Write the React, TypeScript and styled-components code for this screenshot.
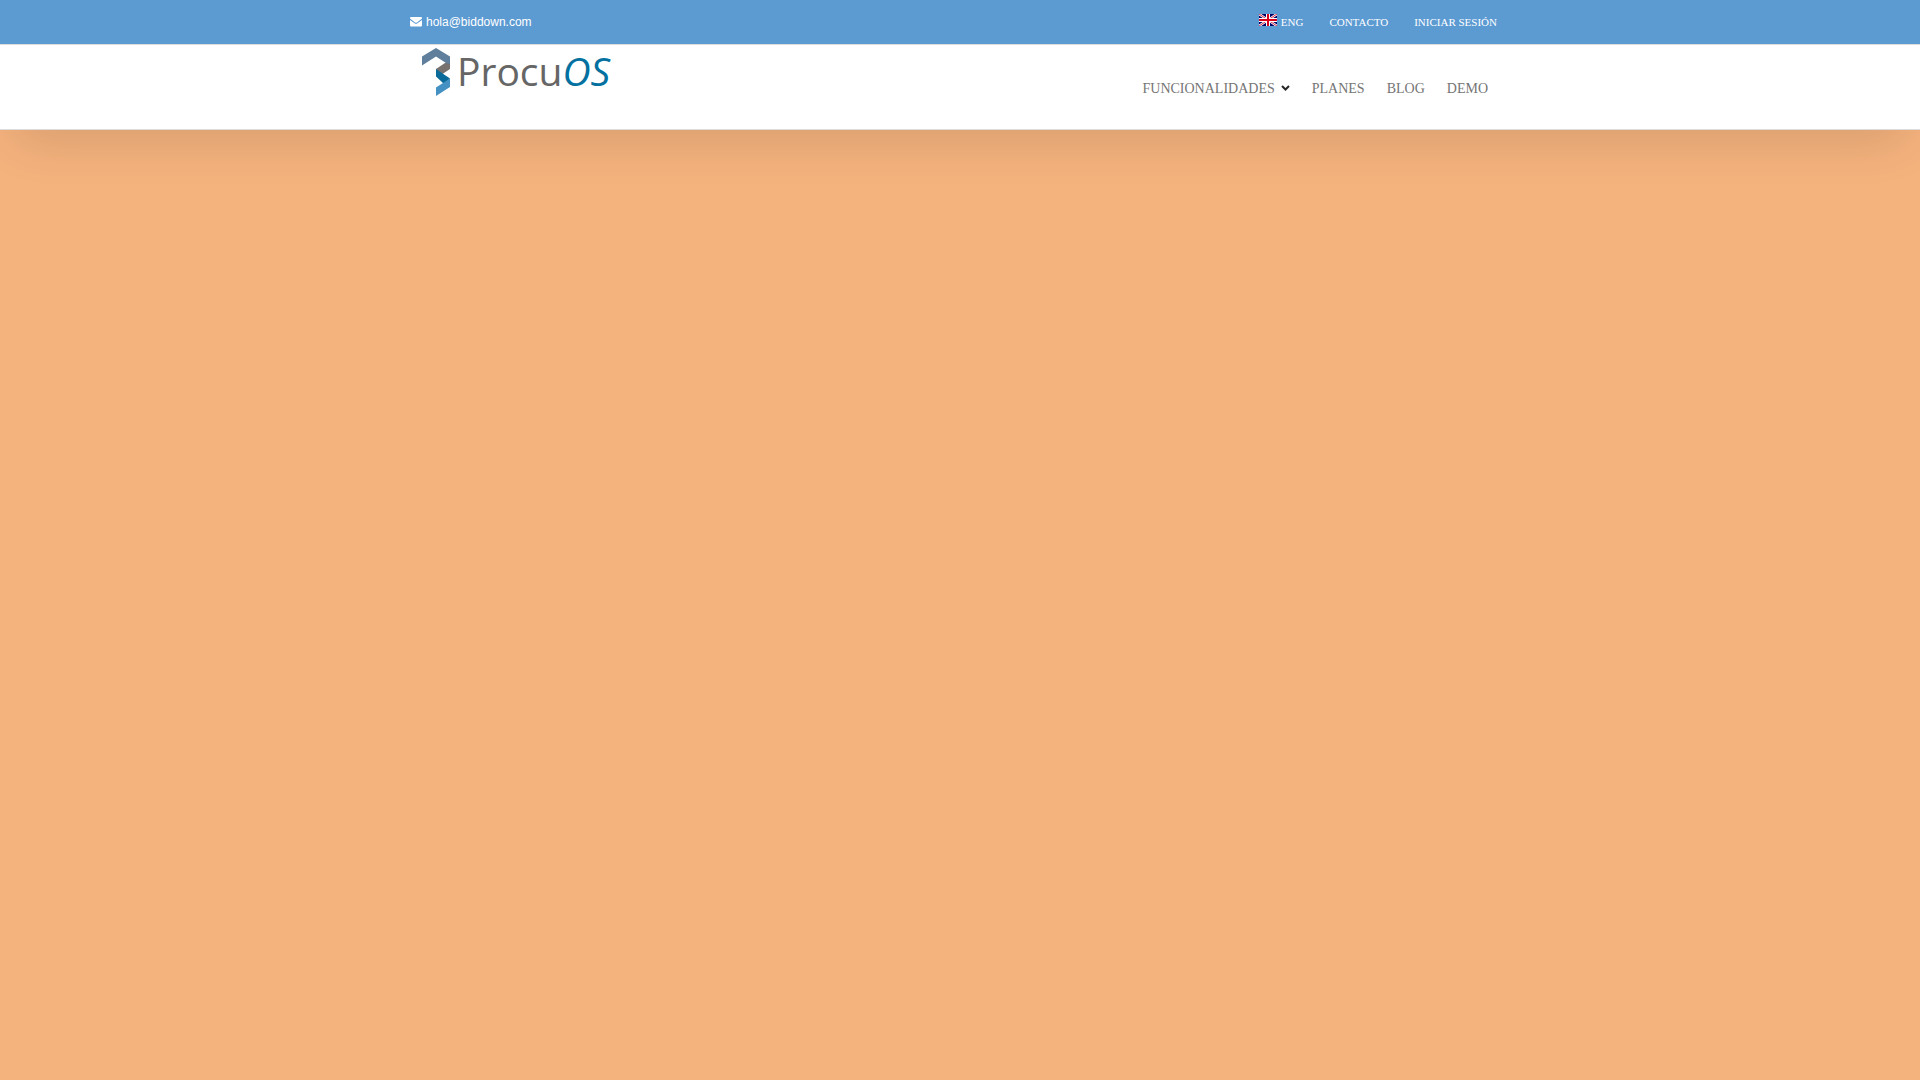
import React from "react";
import styled, { createGlobalStyle } from "styled-components";

const GlobalStyle = createGlobalStyle`
  *, *::before, *::after { box-sizing: border-box; }
  body {
    margin: 0;
    background: #f4b27d;
    font-family: "Liberation Serif", "Times New Roman", serif;
  }
`;

const Page = styled.div`
  min-height: 100vh;
  overflow-x: clip;
  background: #f4b27d;
`;

const Header = styled.header`
  box-shadow: 0 25px 50px -15px rgba(0, 0, 0, 0.12);
`;

const Bar = styled.div<{ $tone: string }>`
  background: ${(p) => p.$tone};
  border-bottom: 1px solid #dcdcdc;
`;

const Container = styled.div<{ $height: number }>`
  display: flex;
  justify-content: space-between;
  width: calc(100% - 40px);
  max-width: 1100px;
  min-height: ${(p) => p.$height}px;
  margin: 0 auto;
`;

const Email = styled.a`
  display: flex;
  align-items: center;
  gap: 4px;
  color: #fff;
  font: 12px/44px "Liberation Sans", Arial, sans-serif;
  text-decoration: none;
`;

const TopNav = styled.nav`
  display: flex;
`;

const TopLink = styled.a`
  display: flex;
  align-items: center;
  gap: 4px;
  padding: 0 13px;
  color: #fff;
  font-size: 11px;
  line-height: 44px;
  text-decoration: none;
`;

const Flag = styled.svg`
  width: 18px;
  height: 12px;
  margin-bottom: 4px;
`;

const Brand = styled.a`
  display: flex;
  align-items: flex-start;
  gap: 7px;
  padding: 2px 12px;
  color: #666;
  font: 39px/48px "Open Sans", "Noto Sans", sans-serif;
  text-decoration: none;
`;

const BrandMark = styled.svg`
  width: 28px;
  height: 49px;
`;

const BrandAccent = styled.em`
  color: #0471a0;
`;

const MainNav = styled.nav`
  display: flex;
  align-items: center;
  padding: 4px 11px 0 0;
`;

const MainLink = styled.a`
  display: flex;
  align-items: center;
  gap: 6px;
  padding: 0 11px;
  color: #757575;
  font-size: 14px;
  line-height: 24px;
  text-decoration: none;
`;

function EnvelopeIcon() {
  return (
    <svg width="12" height="10" viewBox="0 0 12 10" fill="#fff" aria-hidden="true">
      <path d="M1 0h10a1 1 0 0 1 1 1v.6L7 5.5q-1 .7-2 0L0 1.6V1a1 1 0 0 1 1-1z" />
      <path d="M0 2.9 4.5 6.3q1.5 1 3 0L12 2.9V8.500a1 1 0 0 1-1 1H1a1 1 0 0 1-1-1z" />
    </svg>
  );
}

function UkFlag() {
  return (
    <Flag viewBox="0 0 18 12" aria-hidden="true">
      <path fill="#006" d="M0 0h18v12H0z" />
      <path stroke="#fff" strokeWidth="2.400" d="m0 0 18 12M18 0 0 12" />
      <path stroke="#d8102a" strokeWidth=".9" d="m0 0 18 12M18 0 0 12" />
      <path fill="#fff" d="M7 0h4v12H7zM0 4h18v4H0z" />
      <path fill="#d8001a" d="M8 0h2v12H8zM0 5h18v2H0z" />
    </Flag>
  );
}

function ProcuMark() {
  return (
    <BrandMark viewBox="0 0 28 49" aria-hidden="true">
      <path fill="#77716f" d="M28 14v8l-9 6-5-5v-1l9-6z" />
      <path fill="#5f7f9c" d="M0 9.500 14 1l14 8.500V17l-4-1-10-6.500L0 18.500z" />
      <path fill="#0a6a99" d="m14 22 14 9.500-6 5.500-8-7.500z" />
      <path fill="#4691c4" d="M28 31.500V40l-14 9v-8.500z" />
    </BrandMark>
  );
}

function ChevronIcon() {
  return (
    <svg width="9" height="8" viewBox="0 0 9 8" aria-hidden="true">
      <path fill="none" stroke="#272727" strokeWidth="2" d="m1 1 3.500 3.500L8 1" />
    </svg>
  );
}

export default function App() {
  return (
    <Page>
      <GlobalStyle />
      <Header>
        <Bar $tone="#5c9ad2">
          <Container $height={44}>
            <Email href="mailto:hola@biddown.com">
              <EnvelopeIcon />
              hola@biddown.com
            </Email>
            <TopNav aria-label="Secundario">
              <TopLink href="#eng"><UkFlag />ENG</TopLink>
              <TopLink href="#contacto">CONTACTO</TopLink>
              <TopLink href="#iniciar-sesion">INICIAR SESIÓN</TopLink>
            </TopNav>
          </Container>
        </Bar>
        <Bar $tone="#fff">
          <Container $height={84}>
            <Brand href="#inicio">
              <ProcuMark />
              <span>Procu<BrandAccent>OS</BrandAccent></span>
            </Brand>
            <MainNav aria-label="Principal">
              <MainLink href="#funcionalidades">FUNCIONALIDADES<ChevronIcon /></MainLink>
              <MainLink href="#planes">PLANES</MainLink>
              <MainLink href="#blog">BLOG</MainLink>
              <MainLink href="#demo">DEMO</MainLink>
            </MainNav>
          </Container>
        </Bar>
      </Header>
    </Page>
  );
}
